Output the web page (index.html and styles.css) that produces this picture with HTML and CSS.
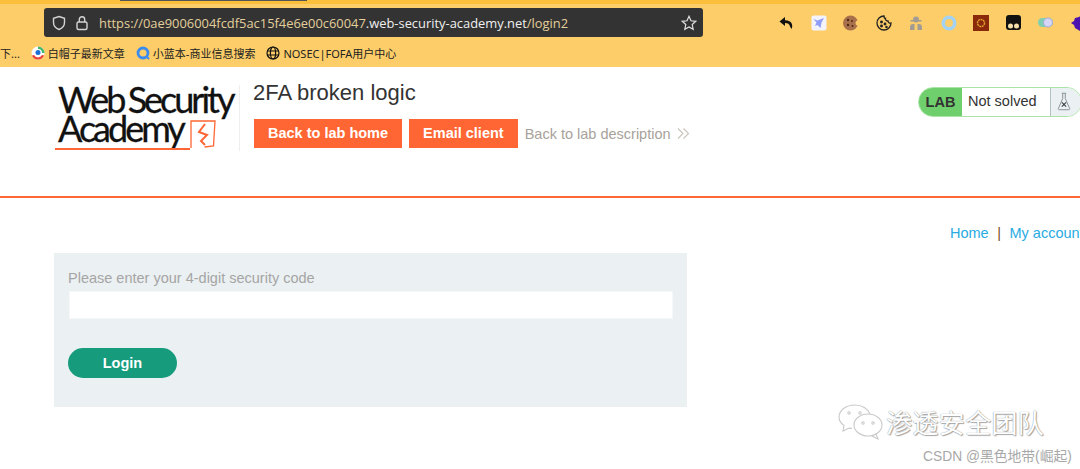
FILE: index.html
```html
<!DOCTYPE html>
<html lang="zh-CN">
<head>
  <meta charset="UTF-8">
  <meta name="viewport" content="width=device-width, initial-scale=1.0">
  <title>2FA broken logic</title>
  <link rel="stylesheet" href="styles.css">
</head>
<body>
  <div class="browser">
    <div class="tab-edge"></div>
    <div class="toolbar">
      <div class="urlbar">
        <svg class="url-icon" width="16" height="16" viewBox="0 0 16 16" fill="none" stroke="#d4d4d4" stroke-width="1.4"><path d="M8 1.5l5.5 1.8v4.2c0 3.4-2.4 5.8-5.5 7-3.1-1.200-5.500-3.600-5.500-7V3.300z"/></svg>
        <svg class="url-icon" width="14" height="16" viewBox="0 0 14 16" fill="none" stroke="#d4d4d4" stroke-width="1.4"><rect x="2" y="7" width="10" height="7.500" rx="1.500"/><path d="M4.300 7V4.500a2.700 2.700 0 0 1 5.400 0V7"/></svg>
        <span class="url">https://0ae9006004fcdf5ac15f4e6e00c60047<b>.web-security-academy.net</b>/login2</span>
        <svg class="star" width="16" height="16" viewBox="0 0 16 16" fill="none" stroke="#e0e0e0" stroke-width="1.200"><path d="M8 1.300l2 4.500 4.800.5-3.600 3.200 1 4.800L8 11.900l-4.200 2.400 1-4.800L1.200 6.300 6 5.800z"/></svg>
      </div>
      <div class="extensions">
        <svg class="ext" width="16" height="16" viewBox="0 0 16 16"><path d="M7 2L1.500 6.500 7 11V8c3 0 4.500 1 5 3.500.5 1 1 1.500 1.500 2.500.8-1.500 1-3.500.3-5.300C13 6.500 10.500 5.300 7 5.200z" fill="#111"/></svg>
        <svg class="ext" width="16" height="16" viewBox="0 0 16 16"><rect x=".5" y=".5" width="15" height="15" rx="2" fill="#f3f3fb"/><path d="M2.500 4l4 1.500L13 3l-2.500 4.500L9.500 13 6.500 10 4 11l1.500-3.500z" fill="#8f9cf8"/></svg>
        <svg class="ext" width="16" height="16" viewBox="0 0 16 16"><circle cx="7.500" cy="8" r="7.500" fill="#a9714b"/><circle cx="15" cy="8" r="2.500" fill="#fccd68"/><circle cx="5" cy="5" r="1.200" fill="#4a2c17"/><circle cx="9" cy="6" r="1" fill="#4a2c17"/><circle cx="5" cy="10" r="1.200" fill="#4a2c17"/><circle cx="9.500" cy="11" r="1" fill="#4a2c17"/></svg>
        <svg class="ext" width="16" height="16" viewBox="0 0 16 16" fill="none" stroke="#222" stroke-width="1.300"><path d="M8 1a7 7 0 1 0 7 7c-1.500.5-3-.5-3-2-1.500 0-3-1-2.500-2.500C8.500 3.500 8 2.500 8 1z"/><circle cx="5.500" cy="7" r=".8" fill="#222"/><circle cx="9" cy="9" r=".8" fill="#222"/><circle cx="5.500" cy="11" r=".8" fill="#222"/><circle cx="10.500" cy="12" r=".6" fill="#222"/></svg>
        <svg class="ext" width="16" height="16" viewBox="0 0 16 16" fill="#a39c92"><circle cx="8" cy="4.500" r="3"/><rect x="2.500" y="5" width="11" height="1.500"/><path d="M2 15v-3a3 3 0 0 1 3-3h1.500v6zM9.500 9H11a3 3 0 0 1 3 3v3H9.500z"/></svg>
        <svg class="ext" width="16" height="16" viewBox="0 0 16 16" fill="none"><circle cx="8" cy="8" r="5.700" stroke="#a2d3f5" stroke-width="3.600"/></svg>
        <svg class="ext" width="16" height="16" viewBox="0 0 16 16"><rect width="16" height="16" fill="#8a2a0b"/><circle cx="8" cy="8" r="3.500" fill="none" stroke="#e0a030" stroke-width="1.500" stroke-dasharray="2 .6"/></svg>
        <svg class="ext" width="16" height="16" viewBox="0 0 16 16"><rect width="15" height="15" rx="3" fill="#111"/><circle cx="4.500" cy="11" r="2.500" fill="#f5dfa8"/><circle cx="10.500" cy="11" r="2.500" fill="#f5dfa8"/></svg>
        <svg class="ext" width="16" height="16" viewBox="0 0 16 16"><rect y="3" width="15" height="9" rx="4.500" fill="#7ecfb0"/><circle cx="10" cy="7.500" r="4.500" fill="#d5d5f5" stroke="#a9a9d8"/></svg>
        <svg class="ext last" width="16" height="16" viewBox="0 0 16 16"><path d="M0 8l3-2 1-3 4-1 3-2h5v16H9l-5-3-1-3z" fill="#4b12b0"/></svg>
      </div>
    </div>
    <div class="bookmarks">
      <span class="bookmark">下...</span>
      <span class="bookmark">
        <svg width="14" height="14" viewBox="0 0 14 14"><circle cx="7" cy="7" r="6.500" fill="#fff"/><path d="M7 .5a6.500 6.500 0 0 1 6.500 6.500H11A4 4 0 0 0 7 3z" fill="#3fb86d"/><path d="M1 9.500a6.500 6.500 0 0 0 12 0l-2-.5a4.500 4.500 0 0 1-8 0z" fill="#e8413c"/><circle cx="7" cy="6.500" r="2.500" fill="#1d6fd8"/></svg>
        白帽子最新文章
      </span>
      <span class="bookmark">
        <svg width="14" height="14" viewBox="0 0 14 14" fill="none"><circle cx="7" cy="7" r="5" stroke="#3b8bf0" stroke-width="2.800"/><path d="M10 10l3 3" stroke="#3b8bf0" stroke-width="2"/></svg>
        小蓝本-商业信息搜索
      </span>
      <span class="bookmark">
        <svg width="14" height="14" viewBox="0 0 14 14" fill="none" stroke="#111" stroke-width="1.200"><circle cx="7" cy="7" r="6"/><ellipse cx="7" cy="7" rx="2.600" ry="6"/><path d="M1 5h12M1 9h12"/></svg>
        NOSEC|FOFA用户中心
      </span>
    </div>
  </div>

  <header class="lab-header">
    <div class="logo">
      <div class="logo-text">
        <span>Web Security</span>
        <span class="logo-row">Academy
          <svg class="logo-mark" width="28" height="30" viewBox="0 0 28 30" fill="none" stroke="#ff6633" stroke-width="1.300"><path d="M2 29V2h24l-1.500 25-9 1"/><path d="M16 5l-6 8 8 3-6 6 4 4" stroke-width="2"/></svg>
        </span>
      </div>
      <div class="logo-line"></div>
    </div>
    <div class="lab-title">
      <h2>2FA broken logic</h2>
      <div class="lab-links">
        <a class="btn-orange">Back to lab home</a>
        <a class="btn-orange">Email client</a>
        <a class="back-link">Back to lab description
          <svg width="13" height="11" viewBox="0 0 13 11" fill="none" stroke="#c9c3bb" stroke-width="1.100"><path d="M1 .5l5 5-5 5M6.500 .5l5 5-5 5"/></svg>
        </a>
      </div>
    </div>
    <div class="lab-status">
      <span class="status-tag">LAB</span>
      <span class="status-text">Not solved</span>
      <span class="status-icon">
        <svg width="14" height="19" viewBox="0 0 16 22" fill="none" stroke="#7d878c" stroke-width="1"><path d="M5.500 1.500h5M6.500 1.500v6L1.500 19a1 1 0 0 0 1 1.500h11a1 1 0 0 0 1-1.500l-5-11.500v-6"/><path d="M5.500 12l5 5M10.500 12l-5 5" stroke="#444" stroke-width="1.400"/></svg>
      </span>
    </div>
  </header>

  <nav class="top-nav">
    <a>Home</a>
    <span class="sep">|</span>
    <a>My account</a>
  </nav>

  <form class="login-panel">
    <label for="code">Please enter your 4-digit security code</label>
    <input id="code" type="text">
    <button type="button">Login</button>
  </form>

  <div class="watermark">
    <div class="wm-name">
      <svg width="46" height="36" viewBox="0 0 46 36" fill="none" stroke="#c9c9c9" stroke-width="1.100"><path d="M17 1C8 1 1 6.500 1 13c0 3.500 2 6.500 5 8.500L5 27l6-3c1 .3 2 .5 3 .5"/><path d="M17 1c7 0 13 3.500 15 9"/><ellipse cx="30" cy="21" rx="14" ry="11"/><path d="M38 30l2 5-6-3"/><circle cx="11" cy="9" r="1.200"/><circle cx="22" cy="9" r="1.200"/><circle cx="25" cy="19" r="1.200"/><circle cx="35" cy="19" r="1.200"/></svg>
      <span>渗透安全团队</span>
    </div>
    <div class="wm-credit">CSDN @黑色地带(崛起)</div>
  </div>
</body>
</html>
```

FILE: styles.css
```css
html, body {
  margin: 0;
  padding: 0;
  height: 469px;
  overflow: hidden;
}

body {
  position: relative;
  background: #fff;
  font-family: "Liberation Sans", Arial, sans-serif;
  color: #333;
}

/* browser chrome */
.browser {
  height: 67px;
  background: #fccd68;
  border-top: 4px solid #fcbf3c;
  box-sizing: border-box;
  position: relative;
}

.tab-edge {
  position: absolute;
  top: -4px;
  left: 120px;
  width: 187px;
  height: 1px;
  background: #555;
}

.toolbar {
  display: flex;
  align-items: center;
  height: 29px;
  padding-top: 4px;
  padding-left: 44px;
}

.urlbar {
  display: flex;
  flex-shrink: 0;
  align-items: center;
  width: 659px;
  height: 29px;
  background: #333;
  border-radius: 3px;
  padding-left: 7px;
  box-sizing: border-box;
}

.url-icon {
  margin-right: 8px;
}

.url {
  flex: 1;
  margin-left: 2px;
  font-family: "Open Sans", sans-serif;
  font-size: 12.900px;
  color: #e3cf9c;
  white-space: nowrap;
}

.url b {
  font-weight: 400;
  color: #f0f0f0;
}

.star {
  margin-right: 6px;
}

.extensions {
  display: flex;
  flex-shrink: 0;
  gap: 16.500px;
  margin-left: 75px;
}

.ext {
  display: block;
}

.bookmarks {
  display: flex;
  align-items: center;
  height: 20px;
  margin-top: 6px;
  gap: 11px;
  font-family: "Noto Sans", "Noto Sans CJK SC", sans-serif;
  font-size: 11px;
  color: #222;
}

.bookmark {
  display: flex;
  align-items: center;
  gap: 3px;
  white-space: nowrap;
}

/* lab header */
.lab-header {
  display: flex;
  height: 129px;
  border-bottom: 2px solid #ff6633;
  padding-left: 58px;
  position: relative;
}

.logo {
  position: relative;
  width: 181px;
  height: 66px;
  margin-top: 18px;
  border-right: 1px solid #eee;
}

.logo-text {
  display: flex;
  flex-direction: column;
  font-family: "Lato", sans-serif;
  font-size: 36px;
  line-height: 29px;
  letter-spacing: -3px;
  color: #111;
  white-space: nowrap;
  -webkit-text-stroke: .3px #111;
}

.logo-text span {
  word-spacing: -2px;
}

.logo-row {
  display: flex;
  align-items: flex-start;
}

.logo-mark {
  margin-left: 6px;
  margin-top: 5px;
}

.logo-line {
  position: absolute;
  left: -3px;
  top: 63px;
  width: 135px;
  height: 1.500px;
  background: #ff6633;
}

.lab-title {
  margin-left: 13px;
}

.lab-title h2 {
  margin: 11px 0 0;
  font-size: 22px;
  font-weight: 400;
  line-height: 30px;
  color: #333;
}

.lab-links {
  display: flex;
  align-items: center;
  margin: 11px 0 0 1px;
  gap: 7px;
}

.btn-orange {
  display: block;
  height: 29px;
  padding: 0 14px;
  background: #ff6633;
  color: #fff;
  font-size: 14.500px;
  font-weight: 700;
  line-height: 29px;
  white-space: nowrap;
}

.back-link {
  font-size: 14.500px;
  color: #a8a29a;
  white-space: nowrap;
}

.back-link svg {
  margin-left: 2px;
}

.lab-status {
  position: absolute;
  top: 20px;
  left: 918px;
  width: 164px;
  height: 30px;
  display: flex;
  box-sizing: border-box;
  border: 1px solid #a9e3a5;
  border-radius: 15px;
  overflow: hidden;
  font-size: 14.500px;
}

.status-tag {
  width: 43px;
  background: #70cf6d;
  font-weight: 700;
  color: #333;
  text-align: center;
  line-height: 28px;
}

.status-text {
  width: 89px;
  padding-left: 6px;
  box-sizing: border-box;
  line-height: 27px;
  border-right: 1px solid #b5c0c4;
}

.status-icon {
  flex: 1;
  background: #ebf0f2;
  padding: 4px 0 0 6px;
}

/* page */
.top-nav {
  display: flex;
  gap: 8.500px;
  margin: 26px 0 0 950px;
  font-size: 14.500px;
  line-height: 18px;
  white-space: nowrap;
  color: #29abe2;
}

.top-nav .sep {
  color: #7a4a20;
}

.login-panel {
  display: flex;
  flex-direction: column;
  align-items: flex-start;
  width: 633px;
  height: 154px;
  margin: 11px 0 0 54px;
  padding: 16px 15px 0 14px;
  box-sizing: border-box;
  background: #ebf0f2;
}

.login-panel label {
  font-size: 14.500px;
  line-height: 19px;
  color: #a5a5a5;
}

.login-panel input {
  width: 100%;
  height: 28px;
  margin: 3px 0 0 1px;
  padding: 0;
  border: 1px solid #f6f7f8;
  box-sizing: border-box;
  background: #fff;
}

.login-panel button {
  width: 109px;
  height: 30px;
  margin-top: 29px;
  border: none;
  border-radius: 15px;
  background: #169c7d;
  color: #fff;
  font-family: inherit;
  font-size: 14.500px;
  font-weight: 700;
}

/* watermark sits over the page */
.watermark {
  position: absolute;
  top: 404px;
  left: 838px;
  width: 242px;
}

.wm-name {
  display: flex;
  align-items: center;
  gap: 2px;
  font-family: "Noto Sans CJK SC", sans-serif;
  font-size: 26.300px;
  line-height: 36px;
  color: #fff;
  text-shadow: 0 0 1px #777, 1px 1px 1px #aaa;
}

.wm-credit {
  margin-top: 5px;
  margin-left: 85px;
  font-family: "Liberation Sans", "Noto Sans CJK SC", sans-serif;
  font-size: 13.800px;
  color: #a8a8a8;
  white-space: nowrap;
}
```
